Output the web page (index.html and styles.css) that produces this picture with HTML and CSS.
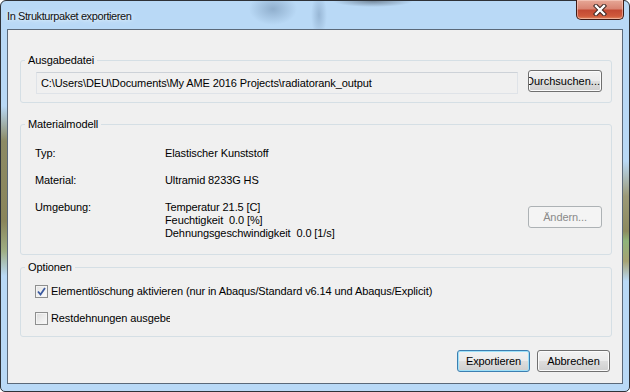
FILE: index.html
```html
<!DOCTYPE html>
<html lang="de">
<head>
    <meta charset="UTF-8">
    <meta name="viewport" content="width=device-width, initial-scale=1.0">
    <title>In Strukturpaket exportieren</title>
    <link rel="stylesheet" href="styles.css">
</head>
<body>
    <div class="window">
        <div class="titlebar">
            <span class="title">In Strukturpaket exportieren</span>
            <button class="close" title="Schließen">
                <svg width="14" height="12" viewBox="0 0 14 12">
                    <path d="M3 2 L11 10 M11 2 L3 10" stroke="#3a2420" stroke-width="4.4" stroke-linecap="square" fill="none"/>
                    <path d="M3 2 L11 10 M11 2 L3 10" stroke="#ffffff" stroke-width="2.4" stroke-linecap="square" fill="none"/>
                </svg>
            </button>
        </div>

        <div class="client">
            <fieldset class="group group-file">
                <legend>Ausgabedatei</legend>
                <div class="file-row">
                    <input class="path" type="text" readonly value="C:\Users\DEU\Documents\My AME 2016 Projects\radiatorank_output">
                    <button class="btn btn-browse"><span>Durchsuchen...</span></button>
                </div>
            </fieldset>

            <fieldset class="group group-material">
                <legend>Materialmodell</legend>
                <div class="props">
                    <span>Typ:</span>
                    <span>Elastischer Kunststoff</span>
                    <span></span>

                    <span>Material:</span>
                    <span>Ultramid 8233G HS</span>
                    <span></span>

                    <span>Umgebung:</span>
                    <div class="env">
                        <div>Temperatur 21.5 [C]</div>
                        <div>Feuchtigkeit&nbsp; 0.0 [%]</div>
                        <div>Dehnungsgeschwindigkeit&nbsp; 0.0 [1/s]</div>
                    </div>
                    <button class="btn btn-change" disabled>Ändern...</button>
                </div>
            </fieldset>

            <fieldset class="group group-options">
                <legend>Optionen</legend>
                <div class="options">
                    <label class="opt">
                        <span class="check checked">
                            <svg width="9" height="9" viewBox="0 0 9 9">
                                <path d="M1 4.5 L3.5 7.5 L8 1" stroke="#3b5aa0" stroke-width="1.8" fill="none"/>
                            </svg>
                        </span>
                        <span>Elementlöschung aktivieren (nur in Abaqus/Standard v6.14 und Abaqus/Explicit)</span>
                    </label>
                    <label class="opt">
                        <span class="check"></span>
                        <span class="clip">Restdehnungen ausgeben</span>
                    </label>
                </div>
            </fieldset>

            <div class="actions">
                <button class="btn btn-default">Exportieren</button>
                <button class="btn">Abbrechen</button>
            </div>
        </div>
    </div>
</body>
</html>
```

FILE: styles.css
```css
body {
    margin: 0;
    font-family: "Liberation Sans", Arial, sans-serif;
    font-size: 11px;
    letter-spacing: -0.1px;
    color: #000;
}
.window {
    box-sizing: border-box;
    width: 630px;
    height: 392px;
    border: 1px solid #2e3238;
    border-radius: 6px 6px 5px 5px;
    padding: 0 6px 7px 6px;
    display: flex;
    flex-direction: column;
    background:
        radial-gradient(ellipse 24px 16px at 272px 8px, rgba(110, 140, 172, 0.55), rgba(110, 140, 172, 0)),
        radial-gradient(ellipse 8px 22px at 318px 14px, rgba(120, 150, 182, 0.5), rgba(120, 150, 182, 0)),
        radial-gradient(ellipse 40px 6px at 372px 0px, rgba(60, 70, 82, 0.55), rgba(60, 70, 82, 0)),
        linear-gradient(#b9d9f6 0, #b9d9f6 105px, #8c8a64 140px, #8a855a 220px, #9fae84 250px, #b9d9f6 275px) left top / 7px 100% no-repeat,
        linear-gradient(#b9d9f6 0, #b9d9f6 160px, #9c9a78 195px, #8d8a5e 230px, #8fb47a 240px, #a6a272 260px, #b9d9f6 280px) right top / 7px 100% no-repeat,
        #b9d9f6;
}
.titlebar {
    height: 28px;
    display: flex;
    justify-content: space-between;
    align-items: flex-start;
}
.title {
    margin-top: 9px;
    line-height: 13px;
    font-size: 11px;
    letter-spacing: -0.4px;
    color: #111;
    text-shadow: 0 0 6px #e8f4ff, 0 0 3px #e8f4ff;
}
.close {
    width: 48px;
    height: 20px;
    margin: -1px -1px 0 0;
    padding: 0;
    border: 1px solid #3f1b16;
    border-top: none;
    border-radius: 0 0 5px 5px;
    background: linear-gradient(#e6a897 0%, #d98573 45%, #c34a33 55%, #cf5a3c 85%, #e08a62 100%);
    box-shadow: inset 0 0 0 1px rgba(255, 220, 210, 0.5);
    display: flex;
    align-items: center;
    justify-content: center;
}
.client {
    flex: 1;
    border: 1px solid #5b6979;
    background: #f0f0f0;
    display: flex;
    flex-direction: column;
}
.group {
    margin: 0 10px 0 12px;
    padding-left: 0;
    padding-right: 0;
    border: 1px solid #d5dfe5;
    border-radius: 3px;
    min-width: 0;
}
.group legend {
    margin-left: 4px;
    padding: 0 3px;
    line-height: 13px;
}
.group-file {
    margin-top: 24px;
    padding-top: 5px;
    padding-bottom: 8px;
}
.group-material {
    margin-top: 15px;
    padding-top: 16px;
    padding-bottom: 14px;
}
.group-options {
    margin-top: 6px;
    padding-top: 11px;
    padding-bottom: 11px;
}
.file-row {
    display: flex;
    align-items: flex-start;
    padding: 0 9px 0 15px;
}
.path {
    box-sizing: border-box;
    width: 482px;
    height: 22px;
    margin: 0;
    padding: 0 4px;
    border: 1px solid #dfe3e8;
    border-top-color: #cdd2d8;
    background: #f0f0f0;
    font-family: "Liberation Sans", Arial, sans-serif;
    font-size: 11px;
    letter-spacing: -0.1px;
    color: #000;
    outline: none;
}
.btn {
    box-sizing: border-box;
    height: 22px;
    padding: 0;
    border: 1px solid #707070;
    border-radius: 3px;
    background: linear-gradient(#f2f2f2 0%, #ebebeb 48%, #dddddd 52%, #cfcfcf 100%);
    box-shadow: inset 0 0 0 1px #fbfbfb;
    font-family: "Liberation Sans", Arial, sans-serif;
    font-size: 11px;
    letter-spacing: -0.1px;
    color: #000;
    width: 73px;
}
.btn-browse {
    width: 74px;
    margin: -2px 0 0 10px;
    display: flex;
    align-items: center;
    justify-content: flex-end;
    overflow: hidden;
    padding-right: 1px;
    letter-spacing: 0;
}
.btn-browse span {
    white-space: nowrap;
}
.props {
    display: grid;
    grid-template-columns: 130px 1fr 74px;
    row-gap: 14px;
    line-height: 13px;
    padding: 0 9px 0 14px;
}
.btn-change {
    width: 74px;
    margin-top: 5px;
    border-color: #adb2b5;
    background: #f4f4f4;
    box-shadow: none;
    color: #8a8a8a;
}
.options {
    display: flex;
    flex-direction: column;
    gap: 14px;
    padding: 0 9px 0 14px;
}
.opt {
    display: flex;
    align-items: center;
    gap: 3px;
    height: 13px;
    line-height: 13px;
}
.check {
    box-sizing: border-box;
    width: 13px;
    height: 13px;
    border: 1px solid #8e8f8f;
    background: linear-gradient(135deg, #dcdcdc, #fbfbfb);
    box-shadow: inset 0 0 0 1px #f4f4f4;
    display: flex;
    align-items: center;
    justify-content: center;
}
.check.checked {
    background: linear-gradient(135deg, #e3e3e3, #fdfdfd);
}
.clip {
    width: 119px;
    overflow: hidden;
    white-space: nowrap;
}
.actions {
    display: flex;
    justify-content: flex-end;
    gap: 7px;
    margin-top: 13px;
    padding-right: 12px;
}
.btn-default {
    border-color: #3c7fb1;
    box-shadow: inset 0 0 0 1px #9fe1f9;
}
```
